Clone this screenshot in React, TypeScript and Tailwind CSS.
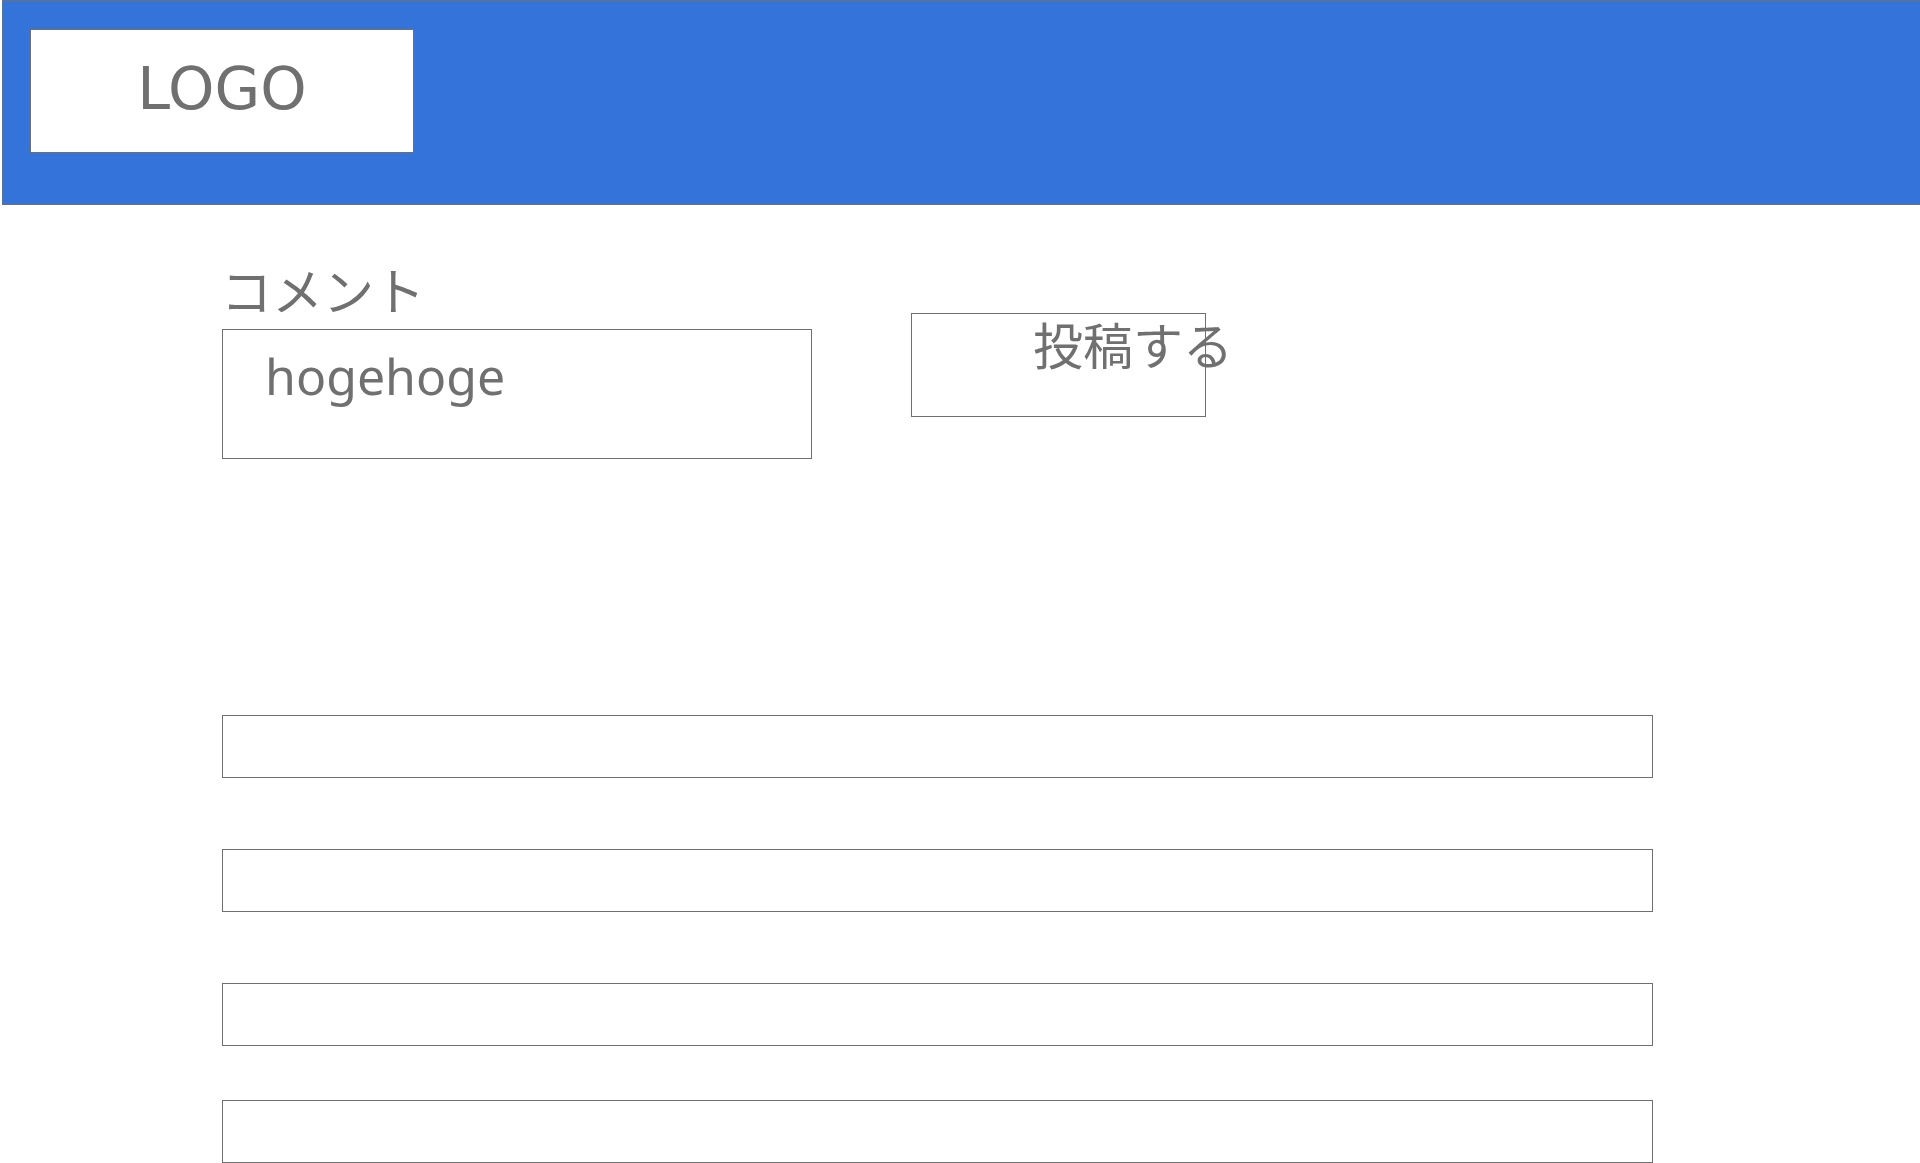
import React from "react";

const jp = { fontFamily: '"Noto Sans CJK JP", "Noto Sans", sans-serif' };

export default function App() {
  return (
    <div className="min-h-screen bg-white text-[#707070]">
      <header className="ml-[2px] box-border h-[205px] border-y border-l border-[#6f6f6f] bg-[#3474da] pl-[27px] pt-[28px]">
        <div
          className="box-border flex h-[124px] w-[384px] items-center justify-center border border-[#6f6f6f] bg-white pb-[5px] text-[59px] leading-none"
          style={{ fontFamily: '"DejaVu Sans", sans-serif' }}
        >
          LOGO
        </div>
      </header>

      <main className="pl-[222px]">
        <div className="mt-[59px] flex items-start">
          <div className="flex w-[590px] flex-col">
            <label className="ml-[-1px] text-[51px] leading-none" style={jp}>
              コメント
            </label>
            <div
              className="mt-[14px] box-border h-[130px] w-[590px] border border-[#6f6f6f] pl-[42px] pt-[21px] text-[50px] leading-none"
              style={{ fontFamily: '"Noto Sans", sans-serif' }}
            >
              hogehoge
            </div>
          </div>
          <button
            className="ml-[99px] mt-[49px] box-border flex h-[104px] w-[295px] items-start overflow-visible whitespace-nowrap border border-[#6f6f6f] bg-white pl-[121px] pt-[4px] text-left text-[50px] leading-none text-[#707070]"
            style={jp}
          >
            投稿する
          </button>
        </div>

        <div className="mt-[256px] flex flex-col">
          <div className="box-border h-[63px] w-[1431px] border border-[#6f6f6f]" />
          <div className="mt-[71px] box-border h-[63px] w-[1431px] border border-[#6f6f6f]" />
          <div className="mt-[71px] box-border h-[63px] w-[1431px] border border-[#6f6f6f]" />
          <div className="mt-[54px] box-border h-[63px] w-[1431px] border border-[#6f6f6f]" />
        </div>
      </main>
    </div>
  );
}
